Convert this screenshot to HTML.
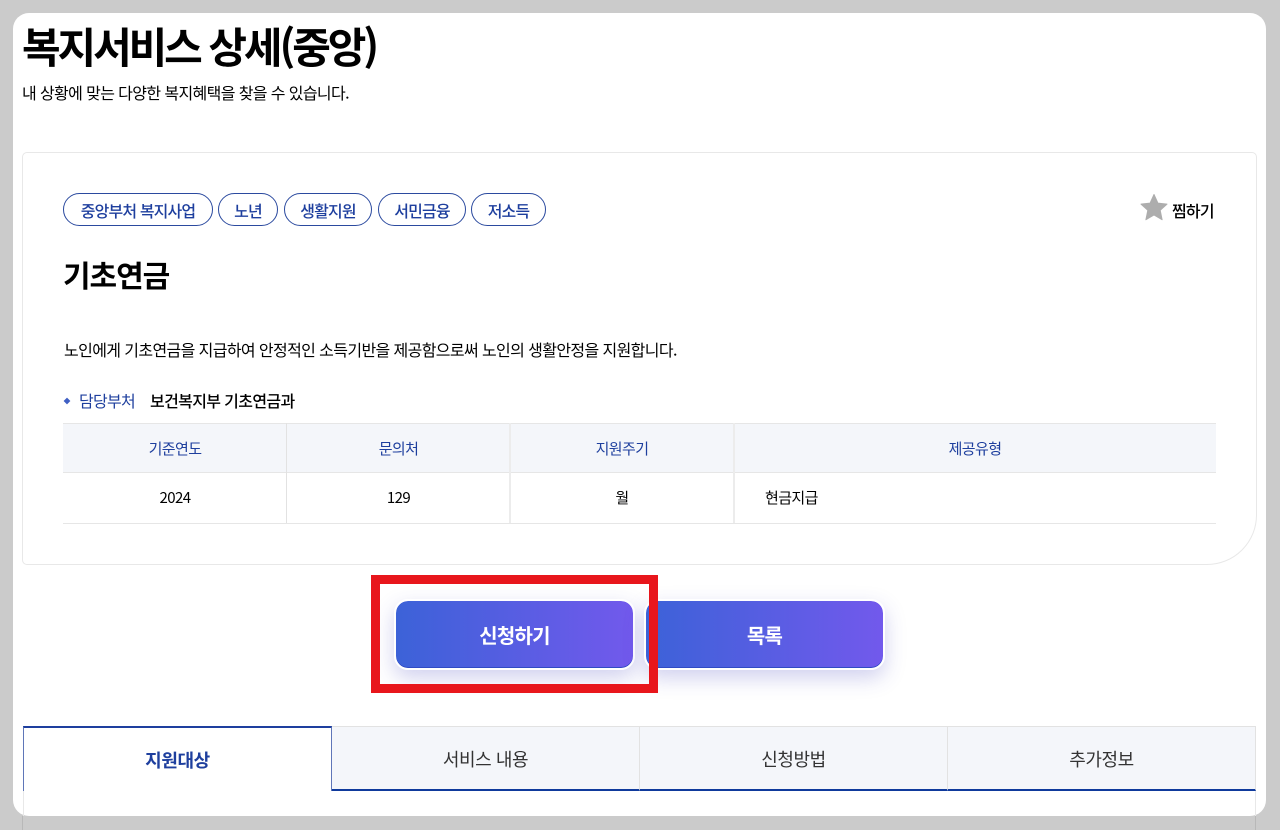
<!DOCTYPE html>
<html lang="ko">
<head>
<meta charset="utf-8">
<style>
html,body{margin:0;padding:0;width:1280px;height:830px;overflow:hidden;background:#cbcbcb;}
body{position:relative;font-family:"Noto Sans CJK KR","Liberation Sans",sans-serif;color:#000;}
div,svg{position:absolute;box-sizing:border-box;}
.t{white-space:nowrap;}
.frame{left:13px;top:13px;width:1253px;height:803px;background:#fff;border-radius:16px;}
.card{left:22px;top:152px;width:1235px;height:413px;background:#fff;border:1px solid #e8e8e8;border-radius:5px 5px 50px 5px;}
.tag{top:193px;height:33px;border:1px solid #2b4a9f;border-radius:17px;color:#1e3f9e;font-size:16px;font-weight:500;letter-spacing:-.85px;line-height:32px;text-align:center;white-space:nowrap;}
.th{top:423px;height:50px;background:#f4f6fa;border-top:1px solid #e6e6e6;border-bottom:1px solid #e6e6e6;color:#1e3f9e;font-size:15px;letter-spacing:-.6px;line-height:49px;text-align:center;white-space:nowrap;}
.td{top:473px;height:51px;border-bottom:1px solid #e6e6e6;font-size:15px;letter-spacing:-.6px;line-height:50px;text-align:center;white-space:nowrap;}
.vl{width:2px;background:#ececec;top:423px;height:100px;}
.btn{top:599px;width:241px;height:71px;border:2px solid #fff;border-radius:14px;background:linear-gradient(90deg,#3c62d8,#7259ec) padding-box;color:#fff;font-size:20px;font-weight:bold;letter-spacing:-.8px;line-height:67px;text-align:center;box-shadow:0 8px 20px rgba(70,70,190,.25),inset 0 -1px 0 #2f4bc4;}
.tab{top:726px;height:65px;background:#f4f6fa;border-top:1px solid #e2e2e2;border-right:1px solid #e2e2e2;border-bottom:2px solid #0f3a9c;color:#333;font-size:18px;letter-spacing:-.45px;line-height:65px;text-align:center;white-space:nowrap;}
</style>
</head>
<body>
<div style="left:22px;top:816px;width:1px;height:14px;background:#b8b8b8"></div>
<div style="left:1255px;top:816px;width:1px;height:14px;background:#b8b8b8"></div>
<div class="frame"></div>

<div class="t" style="left:22px;top:17px;font-size:42px;font-weight:bold;letter-spacing:-3.1px;line-height:58px;">복지서비스 상세(중앙)</div>
<div class="t" style="left:22px;top:80px;font-size:16px;letter-spacing:-.62px;line-height:24px;">내 상황에 맞는 다양한 복지혜택을 찾을 수 있습니다.</div>

<div class="card"></div>

<div class="tag" style="left:63px;width:150px;">중앙부처 복지사업</div>
<div class="tag" style="left:218px;width:60px;">노년</div>
<div class="tag" style="left:284px;width:88px;">생활지원</div>
<div class="tag" style="left:378px;width:88px;">서민금융</div>
<div class="tag" style="left:471px;width:75px;">저소득</div>

<svg style="left:1139.500px;top:193px;" width="28" height="29" viewBox="0 0 28 29"><path d="M14 1.500l3.900 8.600 9.100 1-6.800 6.200 1.900 9.400L14 22l-8.100 4.700 1.900-9.400L1 11.100l9.100-1z" fill="#adadad" stroke="#adadad" stroke-width="1" stroke-linejoin="round"/></svg>
<div class="t" style="left:1172px;top:198px;font-size:16px;font-weight:500;letter-spacing:-.8px;line-height:24px;">찜하기</div>

<div class="t" style="left:63px;top:253px;font-size:30px;font-weight:bold;letter-spacing:-1.05px;line-height:42px;">기초연금</div>

<div class="t" style="left:64px;top:337px;font-size:16px;letter-spacing:-.62px;line-height:24px;">노인에게 기초연금을 지급하여 안정적인 소득기반을 제공함으로써 노인의 생활안정을 지원합니다.</div>

<div style="left:64px;top:398px;width:6px;height:6px;background:#3f5fc4;transform:rotate(45deg) scale(.8);"></div>
<div class="t" style="left:79px;top:388px;font-size:16px;letter-spacing:-.7px;line-height:24px;color:#1e3f9e;">담당부처</div>
<div class="t" style="left:150px;top:388px;font-size:16px;font-weight:500;letter-spacing:-.65px;line-height:24px;">보건복지부 기초연금과</div>

<div class="th" style="left:63px;width:224px;">기준연도</div>
<div class="th" style="left:287px;width:223px;">문의처</div>
<div class="th" style="left:510px;width:224px;">지원주기</div>
<div class="th" style="left:734px;width:482px;">제공유형</div>
<div class="td" style="left:63px;width:224px;">2024</div>
<div class="td" style="left:287px;width:223px;">129</div>
<div class="td" style="left:510px;width:224px;">월</div>
<div class="td" style="left:734px;width:482px;text-align:left;padding-left:31px;">현금지급</div>
<div class="vl" style="left:286px;width:1px;background:#e2e2e2;"></div>
<div class="vl" style="left:509px;"></div>
<div class="vl" style="left:733px;"></div>

<div class="btn" style="left:394px;">신청하기</div>
<div class="btn" style="left:644px;">목록</div>
<div style="left:371px;top:575px;width:287px;height:118px;border:9px solid #e8161c;"></div>

<div style="left:23px;top:726px;width:309px;height:65px;background:#fff;border-top:2px solid #1e3f9e;border-left:1px solid #5f76b8;border-right:1px solid #5f76b8;color:#1e3f9e;font-size:18px;font-weight:bold;letter-spacing:-.4px;line-height:64px;text-align:center;white-space:nowrap;">지원대상</div>
<div class="tab" style="left:332px;width:308px;">서비스 내용</div>
<div class="tab" style="left:640px;width:308px;">신청방법</div>
<div class="tab" style="left:948px;width:308px;">추가정보</div>
<div style="left:23px;top:791px;width:1px;height:25px;background:#e8e8e8"></div>
<div style="left:1255px;top:791px;width:1px;height:25px;background:#e8e8e8"></div>
</body>
</html>
